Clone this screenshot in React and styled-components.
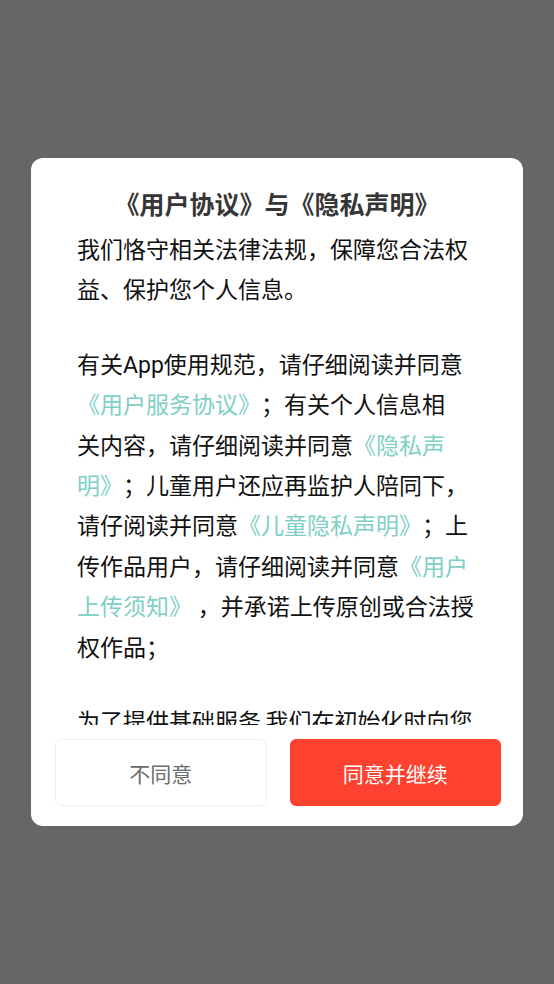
import React from "react";
import styled, { createGlobalStyle } from "styled-components";

const GlobalStyle = createGlobalStyle`
  html, body {
    margin: 0;
    padding: 0;
    background: #666666;
  }
  body {
    font-family: Roboto, "Noto Sans CJK SC", "Noto Sans", sans-serif;
    text-spacing-trim: space-all;
  }
  * { box-sizing: border-box; }
`;

const Overlay = styled.div`
  width: 100%;
  min-height: 100vh;
  display: flex;
  align-items: center;
  justify-content: center;
  background: #666666;
`;

const Dialog = styled.div`
  width: 492px;
  height: 668px;
  background: #ffffff;
  border-radius: 12px;
  display: flex;
  flex-direction: column;
  padding: 30px 0 20px;
`;

const Title = styled.h1`
  margin: 0;
  font-family: Roboto, "Noto Sans CJK SC", sans-serif;
  font-size: 25px;
  line-height: 36px;
  font-weight: 700;
  color: #363636;
  text-align: center;
  text-spacing-trim: space-all;
`;

const Body = styled.div`
  margin-top: 7px;
  height: 494px;
  overflow-y: auto;
  padding: 0 46px;
  scrollbar-width: none;
  &::-webkit-scrollbar { display: none; }
`;

const Paragraph = styled.p`
  margin: 0 0 34px;
  font-size: 23px;
  line-height: 40.4px;
  color: #111111;
  white-space: nowrap;
  text-spacing-trim: space-all;
`;

const Link = styled.span`
  color: #7ecfc5;
`;

const Actions = styled.div`
  margin-top: 14px;
  display: flex;
  gap: 23px;
  padding: 0 22px 0 24px;
`;

const Button = styled.button`
  flex: 1;
  height: 67px;
  border-radius: 6px;
  font-family: Roboto, "Noto Sans CJK SC", sans-serif;
  font-size: 21px;
  cursor: pointer;
  border: 1px solid ${(p) => (p.$primary ? "#ff4130" : "#f0f0f0")};
  background: ${(p) => (p.$primary ? "#ff4130" : "#ffffff")};
  color: ${(p) => (p.$primary ? "#ffffff" : "#6b6b6b")};
`;

export default function App() {
  return (
    <>
      <GlobalStyle />
      <Overlay>
        <Dialog>
          <Title>《用户协议》与《隐私声明》</Title>
          <Body>
            <Paragraph>
              我们恪守相关法律法规，保障您合法权
              <br />
              益、保护您个人信息。
            </Paragraph>
            <Paragraph>
              有关App使用规范，请仔细阅读并同意
              <br />
              <Link>《用户服务协议》</Link>；有关个人信息相
              <br />
              关内容，请仔细阅读并同意<Link>《隐私声<br />明》</Link>；儿童用户还应再监护人陪同下，
              <br />
              请仔阅读并同意<Link>《儿童隐私声明》</Link>；上
              <br />
              传作品用户，请仔细阅读并同意<Link>《用户<br />上传须知》</Link> ，并承诺上传原创或合法授
              <br />
              权作品；
            </Paragraph>
            <Paragraph>
              为了提供基础服务,我们在初始化时向您
              <br />
              申请必要的权限，用于保障应用的正常
              <br />
              运行与账号安全。
            </Paragraph>
          </Body>
          <Actions>
            <Button type="button">不同意</Button>
            <Button type="button" $primary>
              同意并继续
            </Button>
          </Actions>
        </Dialog>
      </Overlay>
    </>
  );
}
